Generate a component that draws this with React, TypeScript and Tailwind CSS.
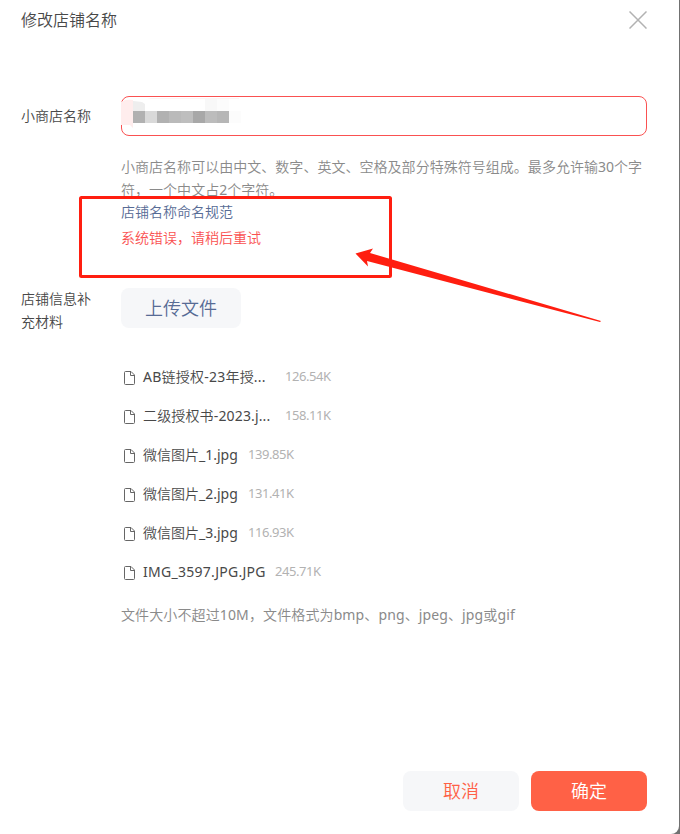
import type { CSSProperties } from 'react';

interface UploadedFile {
  name: string;
  size: string;
  nameClass: string;
}

const files: UploadedFile[] = [
  { name: 'AB链授权-23年授...', size: '126.54K', nameClass: 'w-[132px] tracking-[0.23px]' },
  { name: '二级授权书-2023.j...', size: '158.11K', nameClass: 'w-[132px] tracking-[0.15px]' },
  { name: '微信图片_1.jpg', size: '139.85K', nameClass: 'w-[95px]' },
  { name: '微信图片_2.jpg', size: '131.41K', nameClass: 'w-[95px]' },
  { name: '微信图片_3.jpg', size: '116.93K', nameClass: 'w-[95px]' },
  { name: 'IMG_3597.JPG.JPG', size: '245.71K', nameClass: 'w-[122px] tracking-[0.28px]' },
];

// greys of the masked shop name, one per 12px block
const mosaic = ['#b1b1b1', '#d9d9d9', '#b1b1b1', '#bababa', '#bebebe', '#a8a8a8', '#bcbcbc', '#b6b6b6', '#fcfcfc'];

function FileIcon() {
  return (
    <svg width="12" height="14" viewBox="0 0 12 14" fill="none" stroke="#666" strokeWidth="1" className="mt-[2px] shrink-0">
      <path d="M1.5 .5H7L10.5 4V12.5Q10.5 13.5 9.5 13.5H1.5Q.5 13.5 .5 12.5V1.5Q.5 .5 1.5 .5Z" />
      <path d="M6.5 .8V4.5H10.4" />
    </svg>
  );
}

function NameInput() {
  return (
    <div className="relative h-10 w-[526px] rounded-lg border border-[#fa5151]">
      <svg width="120" height="38" viewBox="0 0 120 38" className="absolute -left-px -top-px">
        <path d="M0 6Q4 3 12 4V32L9 29H0Z" fill="#ffeded" />
        <path d="M12 5L21 6L24 8V15H12Z" fill="#eee" />
        <path d="M30 2H118V3H26Z" fill="#fff3f3" />
        <rect x="84" y="3" width="12" height="12" fill="#f8f8f8" />
        <rect x="96" y="3" width="12" height="12" fill="#fcfcfc" />
      </svg>
      <div className="absolute left-[11px] top-[14px] flex">
        {mosaic.map((color, i) => {
          const style: CSSProperties = { background: color };
          return <span key={i} className="h-3 w-3" style={style} />;
        })}
      </div>
    </div>
  );
}

function Annotation() {
  return (
    <svg width="680" height="834" viewBox="0 0 680 834" className="pointer-events-none absolute left-0 top-0">
      <rect x="80.5" y="197.5" width="310" height="79" rx="1" fill="none" stroke="#ff1e10" strokeWidth="3" />
      <path d="M355.5 253.5L373 248.5L370 253L601 321L600 322L367 261L368 266.5Z" fill="#ff1e10" />
    </svg>
  );
}

export default function App() {
  return (
    <div className="relative h-[834px] w-[680px] overflow-hidden bg-[#717171] font-['Noto_Sans','Noto_Sans_CJK_SC_DemiLight','Noto_Sans_CJK_SC',sans-serif] font-normal text-[#484848]">
      <div className="flex h-full w-[679px] flex-col rounded-br-lg bg-white pl-[21px] pr-[32px]">
        <header className="flex h-10 items-center justify-between">
          <h1 className="text-base leading-6">修改店铺名称</h1>
          <button aria-label="关闭" className="flex h-5 w-[18px] items-center">
            <svg width="18" height="18" viewBox="0 0 18 18" fill="none" stroke="#b2b2b2" strokeWidth="1.5">
              <path d="M.5 .5L17.5 17.5M17.5 .5L.5 17.5" />
            </svg>
          </button>
        </header>

        <div className="mt-14 flex text-sm">
          <label className="w-[100px] shrink-0 leading-10">小商店名称</label>
          <div className="w-[526px]">
            <NameInput />
            <p className="mt-[19px] whitespace-nowrap leading-[23px] tracking-[0.03px] text-[#8a8a8a]">
              小商店名称可以由中文、数字、英文、空格及部分特殊符号组成。最多允许输30个字
              <br />
              符，一个中文占2个字符。
            </p>
            <p className="leading-[22px] text-[#576b95]">店铺名称命名规范</p>
            <p className="mt-1 leading-[22px] text-[#fa5151]">系统错误，请稍后重试</p>
          </div>
        </div>

        <div className="mt-[39px] flex text-sm">
          <label className="-mt-px w-[100px] shrink-0 leading-[23px]">
            店铺信息补
            <br />
            充材料
          </label>
          <div>
            <button className="h-10 w-[120px] rounded-lg bg-[#f6f7f9] text-lg text-[#576b95]">上传文件</button>
            <ul className="mt-[29px]">
              {files.map(file => (
                <li key={file.name} className="flex h-[39px] items-center pl-[3px]">
                  <FileIcon />
                  <span className={`ml-[7px] shrink-0 whitespace-nowrap ${file.nameClass}`}>{file.name}</span>
                  <span className="ml-[10px] text-[13px] tracking-[-0.45px] text-[#b2b2b2]">{file.size}</span>
                </li>
              ))}
            </ul>
            <p className="mt-[13px] whitespace-nowrap leading-[22px] tracking-[0.12px] text-[#8a8a8a]">文件大小不超过10M，文件格式为bmp、png、jpeg、jpg或gif</p>
          </div>
        </div>

        <footer className="mb-[23px] mt-auto flex justify-end gap-3 text-lg">
          <button className="h-10 w-[116px] rounded-lg bg-[#f6f7f9] text-[#ff6146]">取消</button>
          <button className="h-10 w-[116px] rounded-lg bg-[#ff6146] text-white">确定</button>
        </footer>
      </div>
      <Annotation />
    </div>
  );
}
